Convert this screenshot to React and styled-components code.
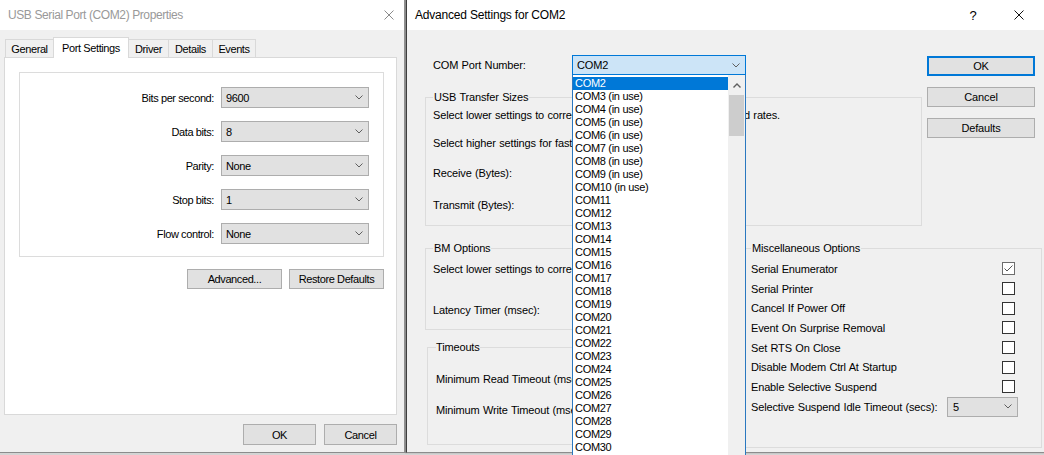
import React from "react";
import styled, { createGlobalStyle } from "styled-components";

const GlobalStyle = createGlobalStyle`
  html, body {
    margin: 0;
    padding: 0;
  }
  body {
    width: 1044px;
    height: 455px;
    overflow: hidden;
    background: #d4d4d4;
    font-family: "Liberation Sans", Arial, sans-serif;
    font-size: 11px;
    color: #000;
  }
`;

const Desktop = styled.div`
  position: relative;
  width: 1044px;
  height: 455px;
  overflow: hidden;
`;

const Window = styled.div`
  position: absolute;
  top: 0;
  left: ${p => p.$x}px;
  width: ${p => p.$w}px;
  height: 453px;
  box-sizing: border-box;
  background: #f0f0f0;
  border: 1px solid ${p => (p.$active ? "#3d3d3d" : "#9a9a9a")};
  border-top: none;
  border-bottom-color: #8c8c8c;
  display: flex;
  flex-direction: column;
  letter-spacing: ${p => p.$ls}px;
  word-spacing: ${p => p.$ws || 0}px;
  overflow: ${p => (p.$active ? "visible" : "hidden")};
  z-index: ${p => (p.$active ? 2 : 1)};
  ${p => p.$active && "box-shadow: -1px 0 1px rgba(0, 0, 0, 0.35);"}
`;

const TitleBar = styled.div`
  height: 30px;
  flex: none;
  background: #fff;
  display: flex;
  align-items: center;
  padding: 0 ${p => p.$pr || 0}px 0 ${p => p.$pl}px;
`;

const Title = styled.div`
  flex: 1;
  font-size: 12px;
  word-spacing: 0;
  letter-spacing: ${p => (p.$active ? -0.2 : -0.4)}px;
  color: ${p => (p.$active ? "#000" : "#999")};
`;

const TitleButton = styled.div`
  width: ${p => p.$w}px;
  height: 30px;
  display: flex;
  align-items: center;
  justify-content: center;
  font-size: 13px;
`;

const Body = styled.div`
  flex: 1;
  padding: ${p => p.$pad};
  display: flex;
  flex-direction: column;
`;

/* ---------- left window ---------- */

const TabRow = styled.div`
  display: flex;
  align-items: flex-end;
  height: 20px;
  padding-left: 1px;
  position: relative;
  z-index: 1;
`;

const Tab = styled.div`
  position: relative;
  width: ${p => p.$w}px;
  height: ${p => (p.$selected ? 21 : 18)}px;
  margin-left: ${p => (p.$first ? 0 : -1)}px;
  margin-bottom: ${p => (p.$selected ? -1 : 0)}px;
  box-sizing: border-box;
  border: 1px solid #d9d9d9;
  border-bottom: none;
  background: ${p => (p.$selected ? "#fff" : "#f0f0f0")};
  z-index: ${p => (p.$selected ? 2 : 0)};
  display: flex;
  align-items: center;
  justify-content: center;
`;

const TabPanel = styled.div`
  height: 358px;
  box-sizing: border-box;
  background: #fff;
  border: 1px solid #d9d9d9;
  padding: 14px 12px 0 14px;
`;

const SettingsBox = styled.div`
  border: 1px solid #dcdcdc;
  padding: 14px 13px 12px 0;
  display: flex;
  flex-direction: column;
  gap: 13px;
`;

const SettingRow = styled.div`
  display: flex;
  align-items: center;
  gap: 7px;
`;

const SettingLabel = styled.div`
  width: 194px;
  text-align: right;
`;

const ButtonRow = styled.div`
  display: flex;
  justify-content: flex-end;
  gap: ${p => p.$gap}px;
  margin-top: ${p => p.$mt}px;
`;

const Button = styled.button`
  width: ${p => p.$w}px;
  height: ${p => p.$h || 21}px;
  box-sizing: border-box;
  padding: 0;
  background: #e1e1e1;
  border: ${p => (p.$focus ? "2px solid #0078d7" : "1px solid #adadad")};
  font: inherit;
  letter-spacing: inherit;
  word-spacing: inherit;
  color: #000;
`;

const Select = styled.div`
  width: ${p => p.$w}px;
  height: ${p => p.$h || 21}px;
  flex: none;
  box-sizing: border-box;
  background: ${p => (p.$open ? "#cce4f7" : "#e1e1e1")};
  border: 1px solid ${p => (p.$open ? "#0078d7" : "#adadad")};
  display: flex;
  align-items: center;
  justify-content: space-between;
  padding: 0 5px 0 ${p => p.$pl || 3}px;
  margin-left: ${p => p.$ml || 0}px;
`;

/* ---------- right window ---------- */

const Section = styled.div`
  display: flex;
  gap: ${p => p.$gap}px;
  margin-top: ${p => p.$mt || 0}px;
`;

const Column = styled.div`
  width: ${p => p.$w}px;
  flex: none;
  display: flex;
  flex-direction: column;
  gap: ${p => p.$gap || 0}px;
  margin-top: ${p => p.$mt || 0}px;
`;

const PortRow = styled.div`
  height: 20px;
  display: flex;
  align-items: center;
  padding-left: 8px;
`;

const PortLabel = styled.div`
  width: 139px;
`;

const ComboWrap = styled.div`
  position: relative;
`;

const DropList = styled.div`
  position: absolute;
  top: 100%;
  left: 0;
  width: 174px;
  height: 400px;
  box-sizing: border-box;
  background: #fff;
  border: 1px solid #2a78c0;
  border-top: none;
  display: flex;
  z-index: 10;
  letter-spacing: -0.3px;
  word-spacing: 0;
`;

const Items = styled.div`
  flex: 1;
  padding-top: 2px;
`;

const Item = styled.div`
  height: 13px;
  line-height: 13px;
  padding-left: 2px;
  white-space: nowrap;
  background: ${p => (p.$sel ? "#0078d7" : "transparent")};
  color: ${p => (p.$sel ? "#fff" : "#000")};
`;

const ScrollBar = styled.div`
  width: 17px;
  flex: none;
  background: #f0f0f0;
  padding-top: 1px;
  display: flex;
  flex-direction: column;
`;

const ScrollArrow = styled.div`
  height: 18px;
  display: flex;
  align-items: center;
  justify-content: center;
`;

const ScrollThumb = styled.div`
  height: 41px;
  margin: 1px 1px 0;
  background: #cdcdcd;
`;

const Group = styled.fieldset`
  box-sizing: border-box;
  width: ${p => p.$w}px;
  min-width: 0;
  margin: ${p => p.$m || "0"};
  padding: 0 ${p => p.$pr || 0}px ${p => p.$pb}px ${p => p.$pl}px;
  border: 1px solid #dcdcdc;
`;

const Legend = styled.legend`
  padding: 0 ${p => (p.$pad === undefined ? 1 : p.$pad)}px;
  line-height: 13px;
`;

const Line = styled.div`
  height: ${p => p.$h || 20}px;
  margin-top: ${p => p.$mt || 0}px;
  display: flex;
  align-items: center;
  white-space: nowrap;
`;

const LineLabel = styled.div`
  width: ${p => p.$w}px;
  flex: none;
`;

const Spacer = styled.div`
  flex: 1;
`;

const CheckBox = styled.div`
  width: 13px;
  height: 13px;
  box-sizing: border-box;
  flex: none;
  background: #fff;
  border: 1px solid ${p => (p.$checked ? "#6d6d6d" : "#333")};
  margin-right: 3px;
  display: flex;
  align-items: center;
  justify-content: center;
`;

/* ---------- drawings ---------- */

const Chevron = ({ up }) => (
  <svg width="8" height="5" viewBox="0 0 8 5">
    <polyline
      points={up ? "0.5,4.5 4,1 7.5,4.5" : "0.5,0.5 4,4 7.5,0.5"}
      fill="none"
      stroke="#5f5f5f"
      strokeWidth={up ? 1.4 : 1}
    />
  </svg>
);

const CloseIcon = ({ color }) => (
  <svg width="10" height="10" viewBox="0 0 10 10">
    <path d="M0.5 0.5 L9.5 9.5 M9.5 0.5 L0.5 9.5" stroke={color} strokeWidth="1" fill="none" />
  </svg>
);

const CheckMark = () => (
  <svg width="11" height="11" viewBox="0 0 11 11">
    <polyline points="1.5,5.5 4,8 9.5,2.5" fill="none" stroke="#555" strokeWidth="1" />
  </svg>
);

/* ---------- data ---------- */

const tabs = [
  { name: "General", w: 49 },
  { name: "Port Settings", w: 76, selected: true },
  { name: "Driver", w: 41 },
  { name: "Details", w: 45 },
  { name: "Events", w: 44 },
];

const portSettings = [
  ["Bits per second:", "9600"],
  ["Data bits:", "8"],
  ["Parity:", "None"],
  ["Stop bits:", "1"],
  ["Flow control:", "None"],
];

const comPorts = [];
for (let n = 2; n <= 32; n++) {
  comPorts.push(n >= 3 && n <= 10 ? `COM${n} (in use)` : `COM${n}`);
}

const miscOptions = [
  ["Serial Enumerator", true],
  ["Serial Printer", false],
  ["Cancel If Power Off", false],
  ["Event On Surprise Removal", false],
  ["Set RTS On Close", false],
  ["Disable Modem Ctrl At Startup", false],
  ["Enable Selective Suspend", false],
];

const PropertiesWindow = () => (
  <Window $x={-1} $w={406} $ls={-0.4}>
    <TitleBar $pl={8}>
      <Title>USB Serial Port (COM2) Properties</Title>
      <TitleButton $w={30}>
        <CloseIcon color="#8a8a8a" />
      </TitleButton>
    </TitleBar>
    <Body $pad="7px 7px 0 4px">
      <TabRow>
        {tabs.map((t, i) => (
          <Tab key={t.name} $w={t.w} $first={i === 0} $selected={t.selected}>
            {t.name}
          </Tab>
        ))}
      </TabRow>
      <TabPanel>
        <SettingsBox>
          {portSettings.map(([label, value]) => (
            <SettingRow key={label}>
              <SettingLabel>{label}</SettingLabel>
              <Select $w={148} $pl={4}>
                <span>{value}</span>
                <Chevron />
              </Select>
            </SettingRow>
          ))}
        </SettingsBox>
        <ButtonRow $gap={7} $mt={12}>
          <Button $w={95} $h={20}>Advanced...</Button>
          <Button $w={95} $h={20}>Restore Defaults</Button>
        </ButtonRow>
      </TabPanel>
      <ButtonRow $gap={8} $mt={9}>
        <Button $w={73}>OK</Button>
        <Button $w={73}>Cancel</Button>
      </ButtonRow>
    </Body>
  </Window>
);

const AdvancedWindow = () => (
  <Window $x={406} $w={641} $ls={-0.15} $ws={0.5} $active>
    <TitleBar $pl={8} $pr={4}>
      <Title $active>Advanced Settings for COM2</Title>
      <TitleButton $w={46}>?</TitleButton>
      <TitleButton $w={46}>
        <CloseIcon color="#111" />
      </TitleButton>
    </TitleBar>
    <Body $pad="25px 4px 0 18px">
      <Section $gap={5}>
        <Column $w={497}>
          <PortRow>
            <PortLabel>COM Port Number:</PortLabel>
            <ComboWrap>
              <Select $w={174} $h={20} $open $pl={4}>
                <span>COM2</span>
                <Chevron />
              </Select>
              <DropList>
                <Items>
                  {comPorts.map((c, i) => (
                    <Item key={c} $sel={i === 0}>
                      {c}
                    </Item>
                  ))}
                </Items>
                <ScrollBar>
                  <ScrollArrow>
                    <Chevron up />
                  </ScrollArrow>
                  <ScrollThumb />
                </ScrollBar>
              </DropList>
            </ComboWrap>
          </PortRow>
          <Group $w={497} $m="16px 0 0 0" $pl={7} $pb={10}>
            <Legend>USB Transfer Sizes</Legend>
            <Line $mt={1}>Select lower settings to correct performance problems at low baud rates.</Line>
            <Line $mt={8}>Select higher settings for faster performance.</Line>
            <Line $mt={10}>
              <LineLabel $w={207}>Receive (Bytes):</LineLabel>
              <Select $w={80} $h={20}>
                <span>4096</span>
                <Chevron />
              </Select>
            </Line>
            <Line $mt={12}>
              <LineLabel $w={207}>Transmit (Bytes):</LineLabel>
              <Select $w={80} $h={20}>
                <span>4096</span>
                <Chevron />
              </Select>
            </Line>
          </Group>
        </Column>
        <Column $w={108} $gap={11} $mt={1}>
          <Button $w={108} $h={20} $focus>OK</Button>
          <Button $w={108} $h={20}>Cancel</Button>
          <Button $w={108} $h={20}>Defaults</Button>
        </Column>
      </Section>

      <Section $gap={6} $mt={16}>
        <Column $w={313}>
          <Group $w={313} $pl={7} $pb={9}>
            <Legend>BM Options</Legend>
            <Line $mt={4}>Select lower settings to correct response problems.</Line>
            <Line $mt={21}>
              <LineLabel $w={207}>Latency Timer (msec):</LineLabel>
              <Select $w={70} $h={20}>
                <span>16</span>
                <Chevron />
              </Select>
            </Line>
          </Group>
          <Group $w={311} $m="11px 0 0 2px" $pl={8} $pb={24}>
            <Legend $pad={0}>Timeouts</Legend>
            <Line $mt={15}>
              <LineLabel $w={207}>Minimum Read Timeout (msec):</LineLabel>
              <Select $w={70} $h={20}>
                <span>0</span>
                <Chevron />
              </Select>
            </Line>
            <Line $mt={11}>
              <LineLabel $w={207}>Minimum Write Timeout (msec):</LineLabel>
              <Select $w={70} $h={20}>
                <span>0</span>
                <Chevron />
              </Select>
            </Line>
          </Group>
        </Column>
        <Group $w={298} $pl={6} $pr={23} $pb={30}>
          <Legend>Miscellaneous Options</Legend>
          {miscOptions.map(([label, checked], i) => (
            <Line key={label} $h={19.7} $mt={i === 0 ? 4 : 0}>
              <span>{label}</span>
              <Spacer />
              <CheckBox $checked={checked}>{checked && <CheckMark />}</CheckBox>
            </Line>
          ))}
          <Line $h={19.7}>
            <span>Selective Suspend Idle Timeout (secs):</span>
            <Spacer />
            <Select $w={71} $h={20} $pl={5}>
              <span>5</span>
              <Chevron />
            </Select>
          </Line>
        </Group>
      </Section>
    </Body>
  </Window>
);

const App = () => (
  <>
    <GlobalStyle />
    <Desktop>
      <PropertiesWindow />
      <AdvancedWindow />
    </Desktop>
  </>
);

export default App;
